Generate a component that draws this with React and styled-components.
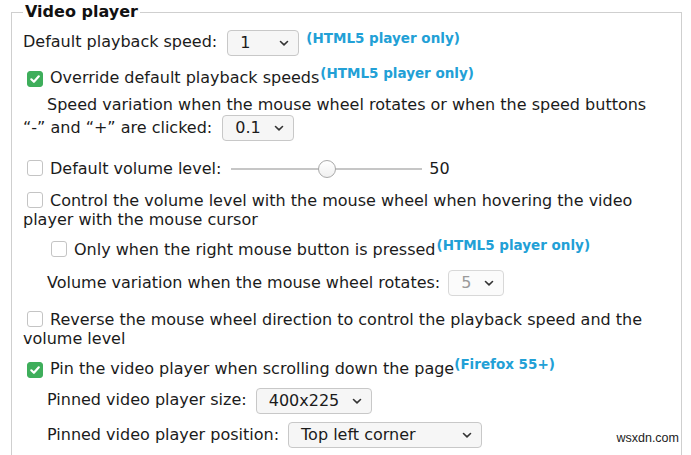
import React from "react";
import styled, { createGlobalStyle } from "styled-components";

const GlobalStyle = createGlobalStyle`
  html, body {
    margin: 0;
    background: #fff;
  }
  body {
    font-family: "DejaVu Sans", "Liberation Sans", sans-serif;
    font-size: 16px;
    color: #1b1b1b;
  }
`;

const Fieldset = styled.fieldset`
  margin: 2px 9px 0 11px;
  padding: 0 11px 20px;
  border: 1px solid #cfcfcf;
  border-bottom: none;
  min-height: 470px;
`;

const Legend = styled.legend`
  padding: 0 2px;
  font-size: 16px;
  font-weight: bold;
  line-height: 20px;
  color: #111;
`;

const Row = styled.div`
  margin-top: ${(p) => p.$top || 0}px;
  padding-left: ${(p) => p.$indent || 0}px;
  text-indent: ${(p) => p.$textIndent || 0}px;
  line-height: ${(p) => p.$lh || 19}px;
`;

const Box = styled.span`
  display: inline-flex;
  align-items: center;
  justify-content: center;
  box-sizing: border-box;
  width: 16px;
  height: 16px;
  margin: 0 7px 0 4px;
  border-radius: 3px;
  vertical-align: -2px;
  text-indent: 0;
  background: ${(p) => (p.$checked ? "#3eae5b" : "#fff")};
  border: 1px solid ${(p) => (p.$checked ? "#3eae5b" : "#c4c4c4")};
`;

const Checkbox = ({ checked }) => (
  <Box $checked={checked}>
    {checked && (
      <svg width="12" height="12" viewBox="0 0 12 12">
        <path
          d="M2.3 6.3 L4.9 8.8 L9.8 3.3"
          fill="none"
          stroke="#fff"
          strokeWidth="2.2"
          strokeLinecap="round"
          strokeLinejoin="round"
        />
      </svg>
    )}
  </Box>
);

const SelectBox = styled.span`
  display: inline-flex;
  align-items: center;
  justify-content: space-between;
  box-sizing: border-box;
  width: ${(p) => p.$width}px;
  height: 26px;
  margin: -4px 0 -4px ${(p) => p.$gap || 10}px;
  padding: 0 9px 0 12px;
  border: 1px solid ${(p) => (p.$disabled ? "#d8d8d8" : "#c8c8c8")};
  border-radius: 4px;
  background: ${(p) => (p.$disabled ? "#fbfbfb" : "#f6f6f6")};
  color: ${(p) => (p.$disabled ? "#9a9a9a" : "#1b1b1b")};
  font-size: 16px;
  line-height: 24px;
  vertical-align: middle;
  text-indent: 0;
`;

const Chevron = () => (
  <svg width="10" height="8" viewBox="0 0 10 8">
    <path
      d="M1.5 2.5 L5 5.8 L8.5 2.5"
      fill="none"
      stroke="#333"
      strokeWidth="1.6"
      strokeLinecap="round"
      strokeLinejoin="round"
    />
  </svg>
);

const Select = ({ value, width, gap, disabled }) => (
  <SelectBox $width={width} $gap={gap} $disabled={disabled}>
    <span>{value}</span>
    <Chevron />
  </SelectBox>
);

const Note = styled.span`
  margin-left: ${(p) => p.$gap ?? 1}px;
  font-size: 13.5px;
  font-weight: bold;
  line-height: 10px;
  color: #22a0d6;
  vertical-align: ${(p) => p.$raise || 5}px;
`;

const Slider = styled.span`
  position: relative;
  display: inline-block;
  width: 191px;
  height: 18px;
  margin: -2px 7px -2px 10px;
  vertical-align: middle;
`;

const Track = styled.span`
  position: absolute;
  left: 0;
  right: 0;
  top: 8px;
  height: 2px;
  background: #c6c6c6;
`;

const Thumb = styled.span`
  position: absolute;
  top: 0;
  box-sizing: border-box;
  width: 18px;
  height: 18px;
  margin-left: -9px;
  border-radius: 50%;
  border: 1px solid #a9a9a9;
  background: linear-gradient(#fff, #f0f0f0);
`;

const Range = ({ value }) => (
  <Slider>
    <Track />
    <Thumb style={{ left: `${value}%` }} />
  </Slider>
);

const Watermark = styled.div`
  position: fixed;
  right: 10px;
  bottom: 10px;
  padding: 0 2px;
  background: #fff;
  font-family: "Liberation Sans", sans-serif;
  font-size: 12.5px;
  color: #222;
`;

export default function App() {
  return (
    <>
      <GlobalStyle />
      <Fieldset>
        <Legend>Video player</Legend>

        <Row $top={10}>
          Default playback speed:
          <Select value="1" width={72} />
          <Note $gap={7} $raise={4}>(HTML5 player only)</Note>
        </Row>

        <Row $top={16}>
          <Checkbox checked />
          Override default playback speeds
          <Note>(HTML5 player only)</Note>
        </Row>

        <Row $top={6} $lh={23} $textIndent={24}>
          Speed variation when the mouse wheel rotates or when the speed buttons
          “-” and “+” are clicked:
          <Select value="0.1" width={72} />
        </Row>

        <Row $top={20}>
          <Checkbox />
          Default volume level:
          <Range value={50} />
          50
        </Row>

        <Row $top={13}>
          <Checkbox />
          Control the volume level with the mouse wheel when hovering the video
          player with the mouse cursor
        </Row>

        <Row $top={11} $indent={24}>
          <Checkbox />
          Only when the right mouse button is pressed
          <Note>(HTML5 player only)</Note>
        </Row>

        <Row $top={14} $indent={24}>
          Volume variation when the mouse wheel rotates:
          <Select value="5" width={56} gap={8} disabled />
        </Row>

        <Row $top={18}>
          <Checkbox />
          Reverse the mouse wheel direction to control the playback speed and
          the volume level
        </Row>

        <Row $top={11}>
          <Checkbox checked />
          Pin the video player when scrolling down the page
          <Note $gap={0}>(Firefox 55+)</Note>
        </Row>

        <Row $top={12} $indent={24}>
          Pinned video player size:
          <Select value="400x225" width={116} gap={9} />
        </Row>

        <Row $top={15} $indent={24}>
          Pinned video player position:
          <Select value="Top left corner" width={194} gap={9} />
        </Row>
      </Fieldset>
      <Watermark>wsxdn.com</Watermark>
    </>
  );
}
